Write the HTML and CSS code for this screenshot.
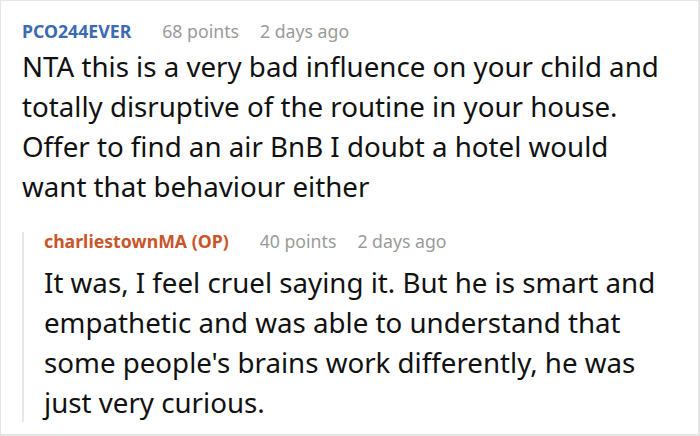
FILE: index.html
```html
<!DOCTYPE html>
<html>
<head>
<meta charset="utf-8">
<link rel="stylesheet" href="styles.css">
</head>
<body>
<div class="frame">
  <div class="comment">
    <div class="meta">
      <span class="author">PCO244EVER</span>
      <span class="info">68 points</span>
      <span class="info">2 days ago</span>
    </div>
    <p class="text">NTA this is a very bad influence on your child and totally disruptive of the routine in your house. Offer to find an air BnB I doubt a hotel would want that behaviour either</p>
    <div class="reply">
      <div class="meta">
        <span class="author op">charliestownMA (OP)</span>
        <span class="info">40 points</span>
        <span class="info">2 days ago</span>
      </div>
      <p class="text last">It was, I feel cruel saying it. But he is smart and empathetic and was able to understand that some people's brains work differently, he was just very curious.</p>
    </div>
  </div>
</div>
</body>
</html>
```

FILE: styles.css
```css
* { box-sizing: border-box; }
html, body { margin: 0; padding: 0; background: #fff; }
body { font-family: "Noto Sans", "Open Sans", sans-serif; color: #111; }
.frame {
  width: 700px;
  height: 436px;
  border: 1px solid #e6e6e6;
  border-right-width: 2px;
  border-bottom-width: 2px;
  overflow: hidden;
}
.comment { padding: 18px 30px 0 21px; }
.meta { display: flex; gap: 21px; font-size: 17.7px; line-height: 24px; }
.author { color: #3b6bb0; font-weight: 700; margin-right: 10px; }
.author.op { color: #c9552a; }
.info { color: #9a9a9a; }
.text { margin: 3px 0 0; font-size: 27.7px; line-height: 40px; }
.reply {
  margin-top: 26px;
  border-left: 2px solid #e8e8e8;
  padding-left: 20px;
}
.reply .meta { line-height: 18px; }
.reply .text { margin-top: 12px; }
.reply .text.last { margin-bottom: -6px; }
```
